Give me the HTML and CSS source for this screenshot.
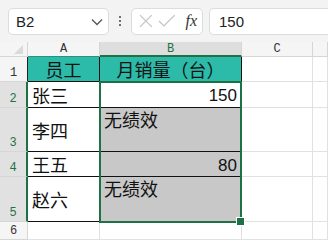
FILE: index.html
```html
<!DOCTYPE html>
<html lang="zh">
<head>
    <meta charset="UTF-8">
    <title>Sheet</title>
    <link rel="stylesheet" href="styles.css">
</head>
<body>

    <div class="toolbar">
        <div class="namebox">
            <span>B2</span>
            <svg class="chev" width="12" height="8" viewBox="0 0 12 8"><path d="M1 1.5 L6 6.5 L11 1.5" fill="none" stroke="#555" stroke-width="1.3"/></svg>
        </div>
        <div class="dots"><i></i><i></i><i></i></div>
        <div class="fxbox">
            <svg width="16" height="16" viewBox="0 0 16 16"><path d="M2 2 L14 14 M14 2 L2 14" stroke="#c4c4c4" stroke-width="1.3"/></svg>
            <svg width="18" height="16" viewBox="0 0 18 16"><path d="M1 8 L6 13 L17 2" fill="none" stroke="#c4c4c4" stroke-width="1.3"/></svg>
            <span class="fx">fx</span>
        </div>
        <div class="formula">150</div>
    </div>

    <div class="sheet">
        <div class="corner"><span class="tri"></span></div>
        <div class="colhead head-a">A</div>
        <div class="colhead sel-col">B</div>
        <div class="colhead">C</div>
        <div class="colhead"></div>

        <div class="rowhead row-1">1</div>
        <div class="cell tbl teal mid">员工</div>
        <div class="cell tbl teal mid">月销量（台）</div>
        <div class="cell"></div>
        <div class="cell"></div>

        <div class="rowhead sel-row">2</div>
        <div class="cell tbl">张三</div>
        <div class="cell tbl num active">150</div>
        <div class="cell"></div>
        <div class="cell"></div>

        <div class="rowhead sel-row">3</div>
        <div class="cell tbl">李四</div>
        <div class="cell tbl grey top">无绩效</div>
        <div class="cell"></div>
        <div class="cell"></div>

        <div class="rowhead sel-row">4</div>
        <div class="cell tbl">王五</div>
        <div class="cell tbl grey num">80</div>
        <div class="cell"></div>
        <div class="cell"></div>

        <div class="rowhead sel-row">5</div>
        <div class="cell tbl">赵六</div>
        <div class="cell tbl grey top">无绩效</div>
        <div class="cell"></div>
        <div class="cell"></div>

        <div class="rowhead">6</div>
        <div class="cell"></div>
        <div class="cell"></div>
        <div class="cell"></div>
        <div class="cell"></div>

        <div class="selection"><span class="handle"></span></div>
    </div>

</body>
</html>
```

FILE: styles.css
```css
body {
    margin: 0;
    width: 328px;
    height: 240px;
    overflow: hidden;
    background: #fff;
    font-family: "Liberation Sans", Arial, sans-serif;
}
.toolbar {
    height: 42px;
    background: #f3f3f3;
    display: flex;
    align-items: center;
    padding: 0 0 0 8px;
    box-sizing: border-box;
}
.namebox {
    width: 101px;
    height: 27px;
    box-sizing: border-box;
    background: #fff;
    border: 1px solid #dcdcdc;
    border-radius: 5px;
    display: flex;
    align-items: center;
    justify-content: space-between;
    padding: 0 5px 0 7px;
    font-size: 15px;
    color: #222;
}
.chev {
    margin-top: 1px;
}
.dots {
    width: 22px;
    display: flex;
    flex-direction: column;
    align-items: center;
    gap: 2px;
}
.dots i {
    width: 2px;
    height: 2px;
    background: #444;
    border-radius: 1px;
}
.fxbox {
    width: 72px;
    height: 27px;
    box-sizing: border-box;
    background: #fff;
    border: 1px solid #dcdcdc;
    border-radius: 5px;
    display: flex;
    align-items: center;
    padding: 0 5px 0 6px;
    gap: 4px;
}
.fx {
    font-family: "Liberation Serif", serif;
    font-style: italic;
    font-size: 16px;
    color: #333;
    margin-left: 6px;
}
.formula {
    margin-left: 6px;
    flex: 1;
    height: 27px;
    box-sizing: border-box;
    background: #fff;
    border: 1px solid #dcdcdc;
    border-right: none;
    border-radius: 5px 0 0 5px;
    display: flex;
    align-items: center;
    padding-left: 9px;
    font-size: 15px;
    color: #222;
}
.sheet {
    display: grid;
    grid-template-columns: 28px 72px 142px 71px 1fr;
    grid-template-rows: 15px 25px 26px 44px 25px 45px 1fr;
    height: 198px;
    position: relative;
}
.sheet > div {
    box-sizing: border-box;
}
.corner {
    background: #f5f5f5;
    border-right: 1px solid #d6d6d6;
    border-bottom: 1px solid #d6d6d6;
    position: relative;
}
.tri {
    position: absolute;
    right: 4px;
    bottom: 2px;
    width: 0;
    height: 0;
    border-left: 9px solid transparent;
    border-bottom: 9px solid #dadada;
}
.colhead {
    background: #f5f5f5;
    border-right: 1px solid #d6d6d6;
    border-bottom: 1px solid #d6d6d6;
    font-family: "Liberation Mono", monospace;
    font-size: 12px;
    color: #333;
    display: flex;
    align-items: center;
    justify-content: center;
}
.head-a {
    border-bottom: 1px solid #2e8f7e;
}
.sel-col {
    background: #dedede;
    color: #1e7145;
    border-bottom: 2px solid #1e7145;
}
.rowhead {
    background: #f5f5f5;
    border-right: 1px solid #d6d6d6;
    border-bottom: 1px solid #d6d6d6;
    font-family: "Liberation Mono", monospace;
    font-size: 12px;
    color: #333;
    display: flex;
    align-items: flex-end;
    justify-content: center;
    padding-bottom: 1px;
}
.row-1 {
    border-right: 1px solid #222;
}
.sel-row {
    background: #e1e1e1;
    color: #1e7145;
    border-right: 2px solid #1e7145;
}
.cell {
    border-right: 1px solid #e1e1e1;
    border-bottom: 1px solid #e1e1e1;
    font-family: "Noto Sans CJK SC", "Liberation Sans", sans-serif;
    font-size: 18px;
    color: #111;
    display: flex;
    align-items: center;
    padding: 0 4px;
    white-space: nowrap;
}
.tbl {
    border-right: 1px solid #111;
    border-bottom: 1px solid #111;
}
.teal {
    background: #2cbba9;
}
.mid {
    justify-content: center;
}
.grey {
    background: #c8c8c8;
}
.top {
    align-items: flex-start;
    line-height: 21px;
    padding-top: 1px;
}
.num {
    justify-content: flex-end;
    font-family: "Liberation Sans", Arial, sans-serif;
    font-size: 17px;
    padding-top: 3px;
}
.selection {
    position: absolute;
    grid-column: 3 / 4;
    grid-row: 3 / 7;
    top: -1px;
    bottom: -1px;
    left: -1px;
    right: 0;
    border: 2px solid #1e7145;
    pointer-events: none;
}
.handle {
    position: absolute;
    right: -5px;
    bottom: -5px;
    width: 7px;
    height: 7px;
    background: #1e7145;
    border: 1px solid #fff;
}
```
